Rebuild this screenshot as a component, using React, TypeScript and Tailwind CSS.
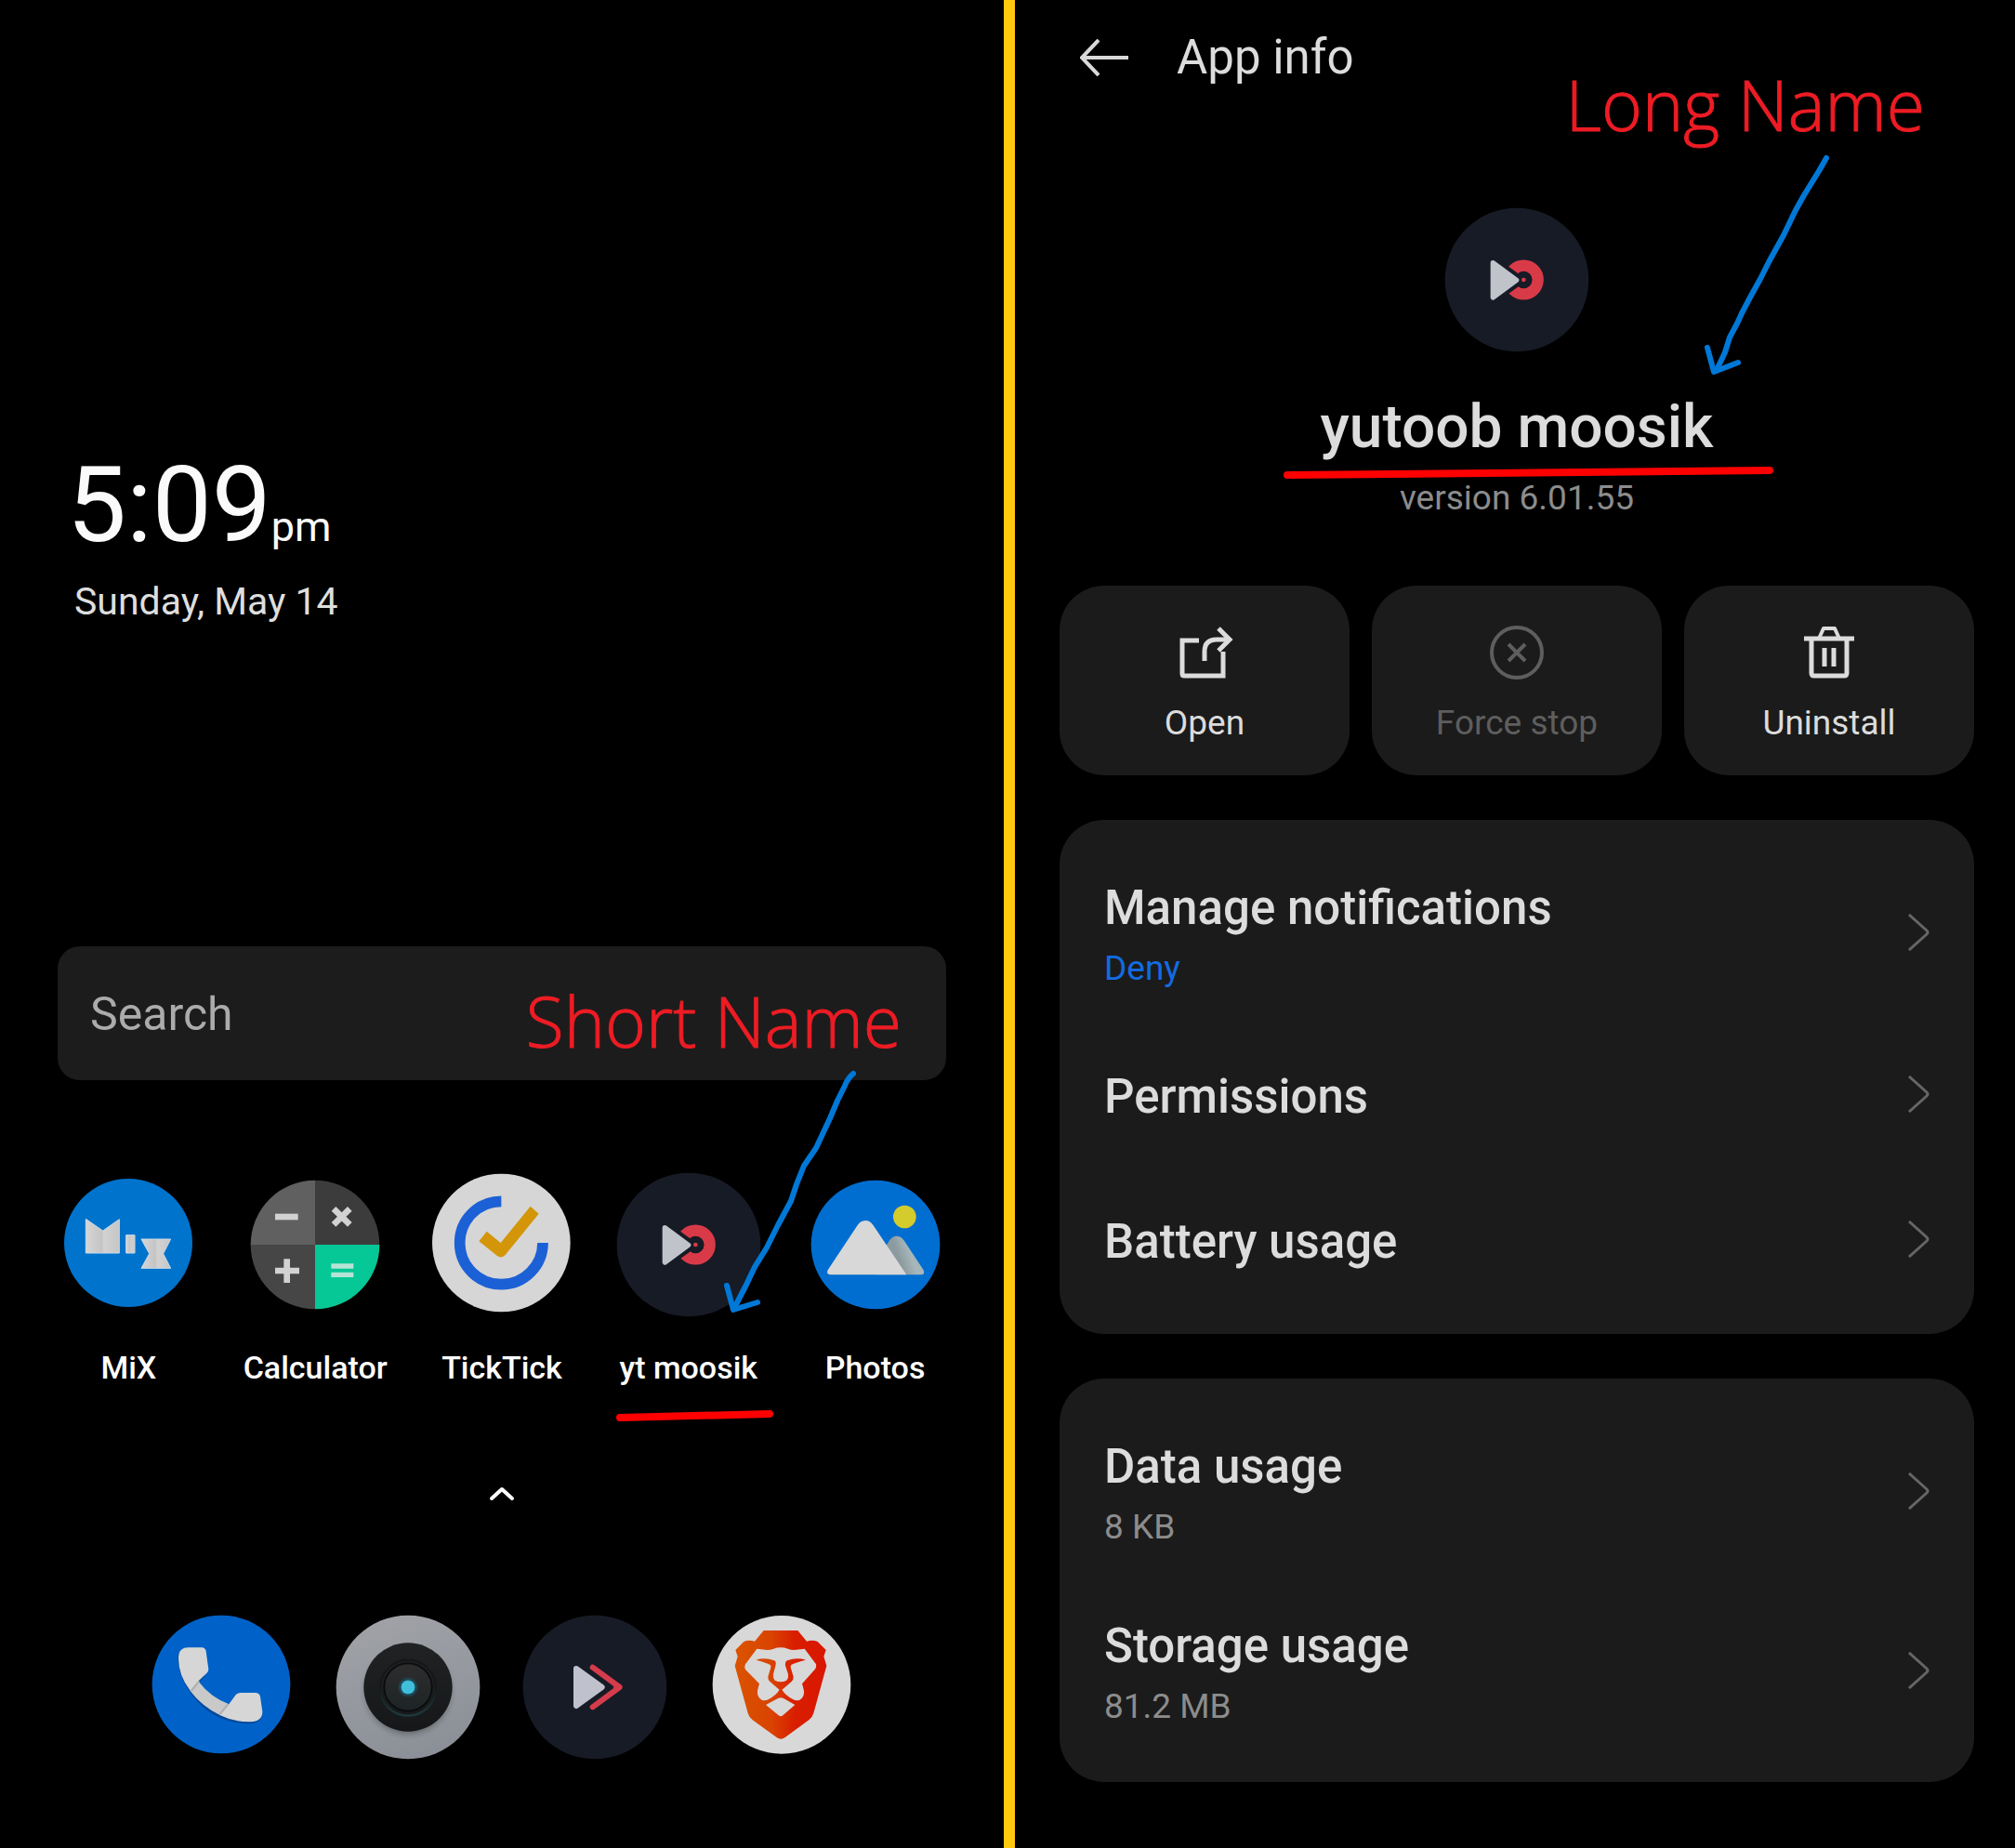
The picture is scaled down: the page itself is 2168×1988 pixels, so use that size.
import type { ReactNode } from "react";

function MixIcon() {
  return (
    <svg viewBox="24 58 480 480" className="size-40" aria-hidden="true">
      <defs>
        <linearGradient id="mix-metal" x1="0" x2="1">
          <stop offset="0" stopColor="#d6d6d6" />
          <stop offset="0.48" stopColor="#c4c4c4" />
          <stop offset="0.54" stopColor="#d2d2d2" />
          <stop offset="1" stopColor="#c6c6c6" />
        </linearGradient>
      </defs>
      <circle cx="264" cy="292" r="207" fill="#0073cc" />
      <g fill="url(#mix-metal)" stroke="#c9dbe8" strokeWidth="3">
        <path d="M127 215 L182 253 L235 216 V325 H127 Z" />
        <path d="M257 267 H285 V325 H257 Z" />
        <path d="M306 280 H401 L377 327 L401 374 H306 L332 327 Z" />
      </g>
    </svg>
  );
}

function CalculatorIcon() {
  return (
    <svg viewBox="626 58 480 480" className="size-40" aria-hidden="true">
      <path d="M866 298 V90 A208 208 0 0 0 658 298 Z" fill="#606060" />
      <path d="M866 298 V90 A208 208 0 0 1 1074 298 Z" fill="#3c3c3c" />
      <path d="M866 298 H658 A208 208 0 0 0 866 506 Z" fill="#464646" />
      <path d="M866 298 H1074 A208 208 0 0 1 866 506 Z" fill="#06c796" />
      <g stroke="#d2d2d2" strokeWidth="20" fill="none">
        <path d="M737 208 H811" />
        <path d="M737 382 H815 M775 344 V421" />
        <path d="M926 182 L978 233 M978 182 L926 233" />
      </g>
      <path d="M918 367 H990 M918 395 H990" stroke="#b5e4d6" strokeWidth="16" />
    </svg>
  );
}

function TickTickIcon() {
  return (
    <svg viewBox="1230 57 480 480" className="size-40" aria-hidden="true">
      <circle cx="1468" cy="291" r="223" fill="#d6d6d6" />
      <path d="M1468 157 A134 134 0 1 0 1602 291" fill="none" stroke="#1c60d6" strokeWidth="35" />
      <path
        d="M1421 254 L1396 286 L1455 333 Q1469 343 1481 330 L1589 197 L1562 173 L1466 291 Z"
        fill="#d39609"
      />
    </svg>
  );
}

function MoosikIcon() {
  return (
    <svg viewBox="302 358 480 480" className="size-40" aria-hidden="true">
      <circle cx="542" cy="598" r="232" fill="#171b26" />
      <circle cx="564" cy="598" r="46" fill="none" stroke="#d93a48" strokeWidth="37" />
      <path
        d="M464 543 L542 599 L464 655 Z"
        fill="#171b26"
        stroke="#171b26"
        strokeWidth="40"
        strokeLinejoin="round"
      />
      <circle cx="564" cy="598" r="27" fill="#171b26" />
      <circle cx="564" cy="598" r="7" fill="#d93a48" />
      <path
        d="M465 543 L541 599 L465 655 Z"
        fill="#c0c4ca"
        stroke="#c0c4ca"
        strokeWidth="16"
        strokeLinejoin="round"
      />
    </svg>
  );
}

function PhotosIcon() {
  return (
    <svg viewBox="905 358 480 480" className="size-40" aria-hidden="true">
      <defs>
        <linearGradient id="ridge" x1="0" x2="1" y1="0.3" y2="0">
          <stop offset="0.35" stopColor="#8b9a9f" />
          <stop offset="0.6" stopColor="#a6b6b9" />
        </linearGradient>
      </defs>
      <circle cx="1145" cy="598" r="208" fill="#006ed0" />
      <circle cx="1239" cy="508" r="37" fill="#d4cb2c" />
      <path
        d="M1150 695 V640 L1187 590 Q1196 570 1212 570 Q1228 570 1238 586 L1300 680 Q1306 695 1292 695 Z"
        fill="url(#ridge)"
      />
      <path
        d="M1000 695 Q984 694 991 680 L1085 538 Q1095 520 1112 520 Q1128 520 1138 536 L1245 695 Z"
        fill="#d8d8d8"
      />
    </svg>
  );
}

function PhoneIcon() {
  return (
    <svg viewBox="53 494 480 480" className="size-40" aria-hidden="true">
      <circle cx="293" cy="725" r="223" fill="#0062c8" />
      <path
        d="M152 640 Q152 612 178 612 H225 L240 700 L215 725 Q255 780 320 795 L350 760 L415 765 L424 820 Q424 848 388 852 Q285 852 220 784 Q155 716 152 640 Z"
        fill="#00499c"
      />
      <path d="M218 714 Q260 768 318 789 L290 825 Q230 795 192 745 Z" fill="#c9c9c9" />
      <path
        d="M155 638 Q156 606 186 606 H230 Q242 607 244 618 L252 676 Q252 684 246 689 L220 714 L193 745 Q154 695 155 638 Z"
        fill="#d6d6d6"
      />
      <path
        d="M318 789 L340 759 Q346 752 356 752 H405 Q417 753 419 765 L426 812 Q426 845 388 846 Q335 847 288 824 Z"
        fill="#d6d6d6"
      />
      <path d="M222 715 L196 746 M315 789 L288 822" stroke="#b0b0b0" strokeWidth="6" />
    </svg>
  );
}

function CameraIcon() {
  return (
    <svg viewBox="656 494 480 480" className="size-40" aria-hidden="true">
      <defs>
        <linearGradient id="cam-body" x1="0.3" x2="0.6" y1="0" y2="1">
          <stop offset="0" stopColor="#a0a2a7" />
          <stop offset="1" stopColor="#8b8f97" />
        </linearGradient>
        <radialGradient id="cam-shadow">
          <stop offset="0.8" stopColor="#4d5056" stopOpacity="0.6" />
          <stop offset="1" stopColor="#8b8f97" stopOpacity="0" />
        </radialGradient>
        <linearGradient id="cam-ring" x1="0" x2="0" y1="0" y2="1">
          <stop offset="0" stopColor="#202224" />
          <stop offset="1" stopColor="#161719" />
        </linearGradient>
        <linearGradient id="cam-glass" x1="0" x2="0" y1="0" y2="1">
          <stop offset="0" stopColor="#2e2d2e" />
          <stop offset="1" stopColor="#1d2425" />
        </linearGradient>
        <linearGradient id="cam-rim" x1="0" x2="0" y1="0" y2="1">
          <stop offset="0.5" stopColor="#15181a" />
          <stop offset="1" stopColor="#1d3a3b" />
        </linearGradient>
        <radialGradient id="cam-glow">
          <stop offset="0.5" stopColor="#17799c" stopOpacity="0.8" />
          <stop offset="1" stopColor="#17799c" stopOpacity="0" />
        </radialGradient>
      </defs>
      <circle cx="896" cy="734" r="232" fill="url(#cam-body)" />
      <circle cx="896" cy="748" r="160" fill="url(#cam-shadow)" />
      <circle cx="896" cy="734" r="143" fill="url(#cam-ring)" />
      <circle cx="896" cy="736" r="90" fill="none" stroke="url(#cam-rim)" strokeWidth="7" />
      <circle cx="896" cy="734" r="77" fill="url(#cam-glass)" stroke="#090b0c" strokeWidth="5" />
      <circle cx="896" cy="734" r="34" fill="url(#cam-glow)" />
      <circle cx="896" cy="734" r="22" fill="#3fbfdc" />
    </svg>
  );
}

function ForwardIcon() {
  return (
    <svg viewBox="58 74 480 480" className="size-40" aria-hidden="true">
      <circle cx="298" cy="314" r="232" fill="#171b26" />
      <path
        d="M238 254 L321 314 L238 374 Z"
        fill="#bfc1cc"
        stroke="#bfc1cc"
        strokeWidth="18"
        strokeLinejoin="round"
      />
      <path
        d="M291 250 L378 314 L291 378"
        fill="none"
        stroke="#d53c4c"
        strokeWidth="18"
        strokeLinecap="round"
        strokeLinejoin="round"
      />
      <path d="M357 314 L366 304 L378 314 L366 324 Z" fill="#d53c4c" />
    </svg>
  );
}

function BraveIcon() {
  return (
    <svg viewBox="662 74 480 480" className="size-40" aria-hidden="true">
      <defs>
        <linearGradient
          id="lion"
          gradientUnits="userSpaceOnUse"
          x1="751"
          x2="1047"
          y1="300"
          y2="300"
        >
          <stop offset="0" stopColor="#da5400" />
          <stop offset="0.4" stopColor="#d94300" />
          <stop offset="0.65" stopColor="#d91e00" />
          <stop offset="1" stopColor="#d91600" />
        </linearGradient>
      </defs>
      <circle cx="902" cy="306" r="223" fill="#d8d8d8" />
      <path
        d="M844 131 H954 L983 166 Q1002 160 1018 167 L1045 194 L1038 215 L1047 245 L1005 398 Q1001 412 990 420 L912 477 Q900 485 887 477 L808 420 Q797 412 793 398 L751 245 L760 215 L753 194 L780 167 Q796 160 815 166 Z"
        fill="url(#lion)"
      />
      <path
        d="M822 190 L856 194 Q866 194 876 190 Q899 182 922 190 Q932 194 942 194 L976 190 L1013 240 Q1015 250 1009 257 L968 303 Q972 316 974 326 Q976 346 960 355 Q950 359 938 353 Q914 340 903 322 L899 317 L895 322 Q884 340 860 353 Q848 359 838 355 Q822 346 824 326 Q826 316 830 303 L785 257 Q781 250 785 240 Z"
        fill="#d8d8d8"
      />
      <path
        d="M819 226 Q848 217 878 228 Q886 232 882 245 L875 272 Q873 284 880 292 Q899 301 918 292 Q925 284 923 272 L914 245 Q912 232 920 228 Q950 217 980 226 Q950 234 934 241 Q930 244 931 250 L940 280 Q941 290 933 297 L899 326 L865 297 Q857 290 858 280 L867 250 Q868 244 864 241 Q848 234 819 226 Z"
        fill="url(#lion)"
      />
      <path
        d="M851 371 L890 350 Q899 346 908 350 L945 371 L906 405 Q899 411 892 405 Z"
        fill="#d8d8d8"
      />
    </svg>
  );
}

function OpenIcon() {
  return (
    <svg viewBox="0 0 64 64" className="size-16" fill="none" stroke="currentColor" strokeWidth="5" aria-hidden="true">
      <path d="M26 19 H8 V55 Q8 57 10 57 H52 V31" />
      <path d="M32 41 V31 Q32 18 45 18 H58" />
      <path d="M47 6 L59 18 L47 30" />
    </svg>
  );
}

function ForceStopIcon() {
  return (
    <svg viewBox="0 0 64 64" className="size-16" fill="none" stroke="currentColor" strokeWidth="4" aria-hidden="true">
      <circle cx="32" cy="32" r="27" />
      <path d="M23 23 L41 41 M41 23 L23 41" />
    </svg>
  );
}

function TrashIcon() {
  return (
    <svg viewBox="0 0 64 64" className="size-16" fill="none" stroke="currentColor" strokeWidth="5" aria-hidden="true">
      <path d="M5 17 H59" />
      <path d="M21 17 L26 6 H38 L43 17" strokeLinejoin="round" strokeWidth="4" />
      <path d="M13 18 V54 Q13 57 16 57 H48 Q51 57 51 54 V18" />
      <path d="M27 27 V47 M37 27 V47" />
    </svg>
  );
}

function ChevronRight() {
  return (
    <svg viewBox="0 0 24 40" className="h-10 w-6 shrink-0 text-[#666666]" aria-hidden="true">
      <path d="M2 1 L21 18 Q23 20 21 22 L2 39" fill="none" stroke="currentColor" strokeWidth="3" />
    </svg>
  );
}

const shelf = [
  { name: "MiX", icon: <MixIcon /> },
  { name: "Calculator", icon: <CalculatorIcon /> },
  { name: "TickTick", icon: <TickTickIcon /> },
  { name: "yt moosik", icon: <MoosikIcon /> },
  { name: "Photos", icon: <PhotosIcon /> },
];

const dock = [
  { name: "Phone", icon: <PhoneIcon /> },
  { name: "Camera", icon: <CameraIcon /> },
  { name: "Player", icon: <ForwardIcon /> },
  { name: "Brave", icon: <BraveIcon /> },
];

function HomeScreen() {
  return (
    <section className="relative min-w-0 pt-[483px] pb-[93px]">
      <div className="px-[72px]">
        <p className="flex items-baseline text-[114px] leading-[120px] text-[#fafafa]">
          <span>5:09</span>
          <span className="text-[45px] leading-[48px]">pm</span>
        </p>
        <p className="mt-5 pl-2 text-[41px] leading-[48px] text-[#dedede]">Sunday, May 14</p>
      </div>

      <div className="relative mx-[62px] mt-[347px]">
        <input
          type="search"
          aria-label="Search"
          placeholder="Search"
          className="block h-36 w-full rounded-3xl bg-[#1c1c1c] px-[35px] pt-0.5 text-[50px] text-[#ababab] outline-none placeholder:text-[#ababab]"
        />
        <span className="pointer-events-none absolute top-10 right-12 font-['Open_Sans',sans-serif] text-[75px] leading-[80px] font-light text-[#ed1c24] [-webkit-text-stroke:1px_#ed1c24]">
          Short Name
        </span>
      </div>

      <div className="mt-[97px] grid grid-cols-5 px-[38px]">
        {shelf.map((app) => (
          <button key={app.name} type="button" className="flex flex-col items-center gap-8">
            {app.icon}
            <span className="text-[34px] leading-10 font-medium text-white">{app.name}</span>
          </button>
        ))}
      </div>

      <button type="button" aria-label="All apps" className="mx-auto mt-[108px] block">
        <svg viewBox="0 0 28 16" className="h-4 w-7" aria-hidden="true">
          <path d="M3 13 L14 3 L25 13" fill="none" stroke="#ffffff" strokeWidth="4" strokeLinecap="round" strokeLinejoin="round" />
        </svg>
      </button>

      <div className="mt-[120px] grid grid-cols-4 pr-[139px] pl-[137px]">
        {dock.map((app) => (
          <button key={app.name} type="button" aria-label={app.name} className="flex justify-center">
            {app.icon}
          </button>
        ))}
      </div>

      <svg
        viewBox="650 1140 290 400"
        className="pointer-events-none absolute top-[1140px] left-[650px] h-[400px] w-[290px]"
        fill="none"
        strokeLinecap="round"
        strokeLinejoin="round"
        aria-hidden="true"
      >
        <path
          d="M918 1155 Q912 1160 909 1168 L901 1184 L893 1203 L878 1235 L865 1254 L857 1274 L851 1292 L837 1318 L825 1342 L812 1363 L803 1382 L790 1407"
          stroke="#0078d7"
          strokeWidth="6"
        />
        <path d="M782 1383 L789 1409 L815 1401" stroke="#0078d7" strokeWidth="6" />
        <path d="M667 1525 L828 1521" stroke="#ff0000" strokeWidth="8" />
      </svg>
    </section>
  );
}

function ActionButton({ icon, label, disabled }: { icon: ReactNode; label: string; disabled?: boolean }) {
  return (
    <button
      type="button"
      disabled={disabled}
      className="flex flex-col items-center gap-5 rounded-[48px] bg-[#1b1b1b] pt-10 pb-8 text-[#dcdcdc] disabled:text-[#5e5e5e]"
    >
      {icon}
      <span className="text-[37px] leading-[48px]">{label}</span>
    </button>
  );
}

function Row({ title, detail, link }: { title: string; detail?: string; link?: boolean }) {
  return (
    <button type="button" className="flex w-full items-center justify-between px-12 py-9 text-left">
      <span className={detail ? "flex flex-col gap-3 pt-1" : "flex flex-col pt-[14px] pb-2"}>
        <span className="text-[51px] leading-[62px] font-medium text-[#dcdcdc]">{title}</span>
        {detail && (
          <span className={link ? "text-[37px] leading-[43px] text-[#136be0]" : "text-[37px] leading-[43px] text-[#8c8c8c]"}>
            {detail}
          </span>
        )}
      </span>
      <ChevronRight />
    </button>
  );
}

function AppInfoScreen() {
  return (
    <section className="relative min-w-0 pt-8 pr-11 pb-[71px] pl-12">
      <header className="flex items-center gap-[52px] pl-[22px]">
        <button type="button" aria-label="Back">
          <svg viewBox="0 0 52 40" className="h-10 w-[52px]" aria-hidden="true">
            <path d="M20 1 L2 20 L20 39 M2 20 H52" fill="none" stroke="#d9d9d9" strokeWidth="4" />
          </svg>
        </button>
        <h1 className="text-[51px] leading-[60px] text-[#dcdcdc]">App info</h1>
      </header>

      <div className="mt-[129px] flex flex-col items-center">
        <MoosikIcon />
        <h2 className="mt-[41px] text-[64px] leading-[76px] font-medium text-[#dcdcdc]">yutoob moosik</h2>
        <p className="mt-4 text-[37px] leading-[44px] text-[#8c8c8c]">version 6.01.55</p>
      </div>

      <div className="mt-[72px] grid grid-cols-3 gap-6">
        <ActionButton icon={<OpenIcon />} label="Open" />
        <ActionButton icon={<ForceStopIcon />} label="Force stop" disabled />
        <ActionButton icon={<TrashIcon />} label="Uninstall" />
      </div>

      <div className="mt-12 rounded-[48px] bg-[#1b1b1b] py-6">
        <Row title="Manage notifications" detail="Deny" link />
        <Row title="Permissions" />
        <Row title="Battery usage" />
      </div>

      <div className="mt-12 rounded-[48px] bg-[#1b1b1b] py-6">
        <Row title="Data usage" detail="8 KB" />
        <Row title="Storage usage" detail="81.2 MB" />
      </div>

      <span className="pointer-events-none absolute top-[72px] right-[97px] font-['Open_Sans',sans-serif] text-[75px] leading-[80px] font-light text-[#ed1c24] [-webkit-text-stroke:1px_#ed1c24]">
        Long Name
      </span>
      <svg
        viewBox="1372 150 608 380"
        className="pointer-events-none absolute top-[150px] left-[280px] h-[380px] w-[608px]"
        fill="none"
        strokeLinecap="round"
        strokeLinejoin="round"
        aria-hidden="true"
      >
        <path
          d="M1965 170 L1957 184 L1941 210 L1932 226 L1919 253 L1903 282 L1894 300 L1884 318 L1874 337 L1869 348 L1861 363 L1856 379 L1847 398"
          stroke="#0078d7"
          strokeWidth="6"
        />
        <path d="M1837 374 L1844 400 L1870 390" stroke="#0078d7" strokeWidth="6" />
        <path d="M1385 511 L1904 506" stroke="#ff0000" strokeWidth="8" />
      </svg>
    </section>
  );
}

export default function App() {
  return (
    <main className="grid min-h-screen grid-cols-[1080fr_12px_1076fr] bg-black font-[Roboto,sans-serif]">
      <HomeScreen />
      <div className="bg-[#ffc90e]" />
      <AppInfoScreen />
    </main>
  );
}
